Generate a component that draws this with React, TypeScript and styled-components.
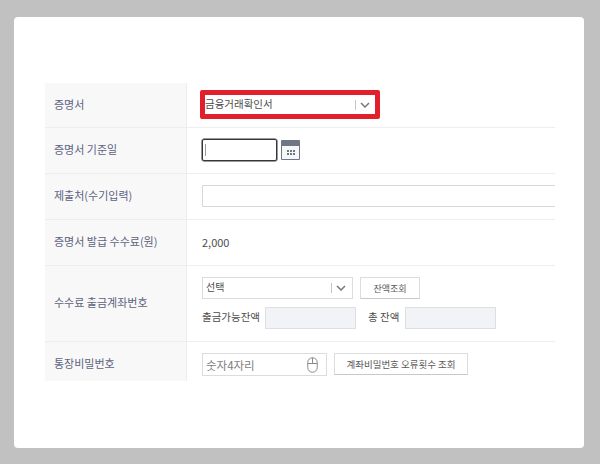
import React from 'react';
import styled, { createGlobalStyle } from 'styled-components';

const GlobalStyle = createGlobalStyle`
    html, body {
        margin: 0;
        padding: 0;
        background: #c1c1c1;
    }
    body {
        font-family: "Noto Sans CJK KR", "Noto Sans", sans-serif;
    }
`;

const ChevronIcon = () => (
    <svg width="10" height="6" viewBox="0 0 10 6" fill="none">
        <path d="M1 1l4 4 4-4" stroke="#77797f" strokeWidth="1.5" />
    </svg>
);

const CalendarIcon = () => (
    <svg width="19" height="20" viewBox="0 0 19 20">
        <rect x="0" y="0" width="19" height="20" rx="1" fill="#6f7686" />
        <rect x="1" y="6" width="17" height="13" fill="#f6f7f9" />
        {[6, 9, 12].map((x) => [10, 13].map((y) => (
            <rect key={`${x}-${y}`} x={x} y={y} width="2" height="2" fill="#6f7686" />
        )))}
    </svg>
);

const MouseIcon = () => (
    <svg width="11" height="16" viewBox="0 0 11 16" fill="none">
        <rect x="0.75" y="0.75" width="9.5" height="14.5" rx="4.7" stroke="#8a8a8a" />
        <path d="M0.75 6.5h9.5M5.5 0.75v5.75" stroke="#8a8a8a" />
    </svg>
);

const App: React.FC = () => {
    return (
        <Page>
            <GlobalStyle />
            <Card>
                <Form>
                    <Row $height={45}>
                        <Label>증명서</Label>
                        <Field>
                            <HighlightSelect>
                                <SelectText $size={10.5}>금융거래확인서</SelectText>
                                <Caret $width={20}><ChevronIcon /></Caret>
                            </HighlightSelect>
                        </Field>
                    </Row>
                    <Row $height={46}>
                        <Label>증명서 기준일</Label>
                        <Field>
                            <DateInput><Cursor /></DateInput>
                            <CalendarButton><CalendarIcon /></CalendarButton>
                        </Field>
                    </Row>
                    <Row $height={46}>
                        <Label>제출처(수기입력)</Label>
                        <Field>
                            <TextBox $width={360} />
                        </Field>
                    </Row>
                    <Row $height={46}>
                        <Label>증명서 발급 수수료(원)</Label>
                        <Field>
                            <Value>2,000</Value>
                        </Field>
                    </Row>
                    <Row $height={76}>
                        <Label>수수료 출금계좌번호</Label>
                        <Stack>
                            <Line>
                                <Select>
                                    <SelectText $size={10}>선택</SelectText>
                                    <Caret $width={21}><ChevronIcon /></Caret>
                                </Select>
                                <Button $width={60} $size={9}>잔액조회</Button>
                            </Line>
                            <Line>
                                <Caption $width={63}>출금가능잔액</Caption>
                                <ReadOnlyBox />
                                <Caption $width={37} $indent={12}>총 잔액</Caption>
                                <ReadOnlyBox />
                            </Line>
                        </Stack>
                    </Row>
                    <LastRow>
                        <LastLabel>통장비밀번호</LastLabel>
                        <Field $top>
                            <PasswordBox>
                                <Placeholder>숫자4자리</Placeholder>
                                <MouseIcon />
                            </PasswordBox>
                            <Button $width={134} $size={9.5}>계좌비밀번호 오류횟수 조회</Button>
                        </Field>
                    </LastRow>
                </Form>
            </Card>
        </Page>
    );
}

const Page = styled.main`
    width: 600px;
    height: 464px;
    padding: 17px 16px 16px 14px;
    box-sizing: border-box;
    overflow: hidden;
`;

const Card = styled.section`
    height: 431px;
    box-sizing: border-box;
    padding: 66px 29px 0 31px;
    background: #fff;
    border-radius: 4px;
`;

const Form = styled.div`
    width: 510px;
    overflow: hidden;
`;

const Row = styled.div<{ $height: number }>`
    display: flex;
    height: ${(p) => p.$height}px;
    box-sizing: border-box;
    border-bottom: 1px solid #eeeef0;
`;

const LastRow = styled.div`
    display: flex;
    height: 39px;
`;

const Label = styled.div`
    flex: 0 0 142px;
    box-sizing: border-box;
    display: flex;
    align-items: center;
    padding: 0 0 3px 9px;
    background: #f8f8f9;
    border-right: 1px solid #eeeef0;
    color: #5d6380;
    font-size: 11px;
`;

const LastLabel = styled(Label)`
    padding: 2px 0 0 9px;
`;

const Field = styled.div<{ $top?: boolean }>`
    display: flex;
    align-items: ${(p) => (p.$top ? 'flex-start' : 'center')};
    padding: ${(p) => (p.$top ? '11px 0 0 15px' : '0 0 1px 15px')};
    min-width: 0;
`;

const Stack = styled.div`
    display: flex;
    flex-direction: column;
    gap: 8px;
    padding: 11px 0 0 15px;
`;

const Line = styled.div`
    display: flex;
    align-items: center;
`;

const HighlightSelect = styled.div`
    display: flex;
    align-items: center;
    width: 180px;
    height: 29px;
    box-sizing: border-box;
    margin-left: -2px;
    border: 5px solid #e1202c;
    border-radius: 2px;
    background: #fff;
    color: #4d4d4d;
`;

const Select = styled.div`
    display: flex;
    align-items: center;
    width: 151px;
    height: 22px;
    box-sizing: border-box;
    padding-left: 3px;
    border: 1px solid #dcdcdc;
    background: #fff;
    color: #4d4d4d;
`;

const SelectText = styled.span<{ $size: number }>`
    flex: 1;
    padding-bottom: 3px;
    font-size: ${(p) => p.$size}px;
`;

const Caret = styled.span<{ $width: number }>`
    display: flex;
    align-items: center;
    width: ${(p) => p.$width}px;
    height: 10px;
    box-sizing: border-box;
    padding-left: 4px;
    border-left: 1px solid #c4c4c4;
`;

const DateInput = styled.div`
    display: flex;
    align-items: center;
    width: 75px;
    height: 22px;
    box-sizing: border-box;
    padding-left: 2px;
    border: 1px solid #33363a;
    border-radius: 2px;
    box-shadow: 0 0 0 0.5px #33363a;
`;

const Cursor = styled.span`
    width: 1px;
    height: 12px;
    background: #999;
`;

const CalendarButton = styled.span`
    display: flex;
    margin-left: 4px;
`;

const TextBox = styled.div<{ $width: number }>`
    flex: none;
    width: ${(p) => p.$width}px;
    height: 22px;
    box-sizing: border-box;
    border: 1px solid #d8d8d8;
    background: #fff;
`;

const Value = styled.span`
    padding-bottom: 1px;
    color: #4d4d4d;
    font-size: 11px;
`;

const Button = styled.button<{ $width: number; $size: number }>`
    flex: none;
    width: ${(p) => p.$width}px;
    height: 22px;
    margin-left: 7px;
    padding: 0;
    box-sizing: border-box;
    border: 1px solid #dcdcdc;
    border-bottom-color: #c8c8c8;
    border-radius: 1px;
    background: #fff;
    color: #5a5a5a;
    font-family: inherit;
    font-size: ${(p) => p.$size}px;
`;

const Caption = styled.span<{ $width: number; $indent?: number }>`
    flex: none;
    width: ${(p) => p.$width}px;
    margin-left: ${(p) => p.$indent ?? 0}px;
    padding-bottom: 3px;
    color: #4d4d4d;
    font-size: 10.5px;
    white-space: nowrap;
`;

const ReadOnlyBox = styled.div`
    width: 91px;
    height: 22px;
    box-sizing: border-box;
    border: 1px solid #dddfe3;
    background: #f2f3f7;
`;

const PasswordBox = styled.div`
    display: flex;
    align-items: center;
    justify-content: space-between;
    width: 125px;
    height: 23px;
    box-sizing: border-box;
    padding: 0 8px 0 3px;
    border: 1px solid #dcdcdc;
    background: #fff;
`;

const Placeholder = styled.span`
    color: #808080;
    font-size: 11.5px;
`;

export default App;
